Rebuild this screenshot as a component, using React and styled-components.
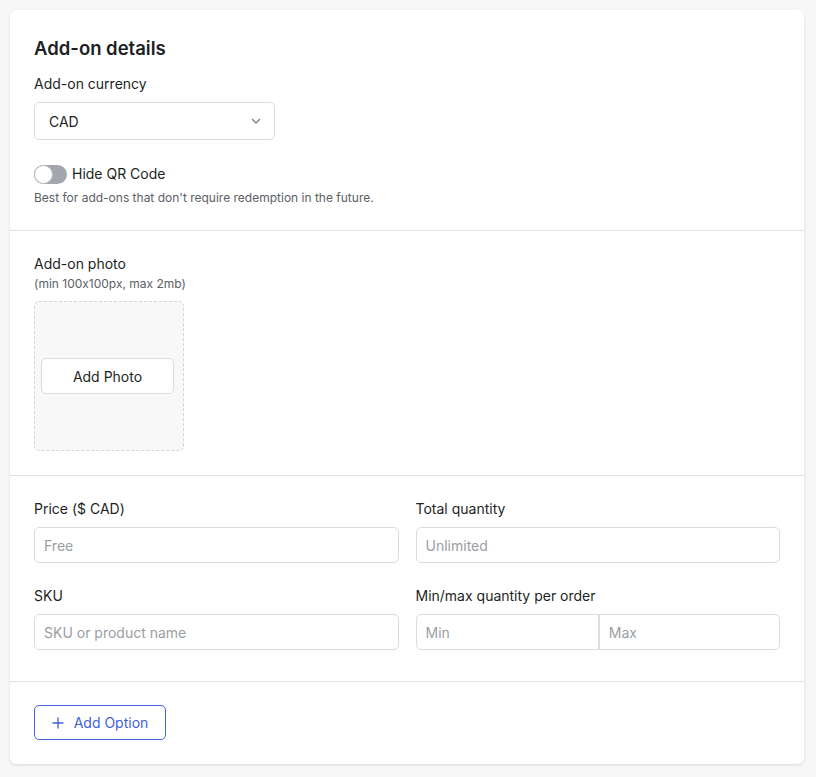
import React from 'react';
import styled, { createGlobalStyle } from 'styled-components';

const Global = createGlobalStyle`
  * { box-sizing: border-box; }
  body {
    margin: 0;
    background: #f7f7f7;
    font-family: Inter, "Noto Sans", sans-serif;
    font-feature-settings: "calt" 0;
    color: #1d1f23;
  }
`;

const Page = styled.div`
  padding: 10px 12px 12px 10px;
`;

const Card = styled.div`
  background: #fff;
  border-radius: 6px;
  box-shadow: 0 1px 3px rgba(0, 0, 0, 0.12);
`;

const Section = styled.div`
  padding: ${p => (p.$first ? 24 : 23)}px 24px ${p => p.$bottom || 24}px;
  border-top: ${p => (p.$first ? 'none' : '1px solid #e2e2e2')};
  display: flex;
  flex-direction: column;
`;

const Title = styled.h2`
  margin: 0 0 12px;
  font-size: 18.5px;
  line-height: 28px;
  font-weight: 600;
`;

const Label = styled.div`
  font-size: 14px;
  line-height: 20px;
  margin-bottom: ${p => p.$mb ?? 8}px;
`;

const Hint = styled.div`
  font-size: 12px;
  line-height: 16px;
  color: #5c6066;
`;

const Select = styled.div`
  width: 241px;
  height: 38px;
  border: 1px solid #dcdcdc;
  border-radius: 5px;
  display: flex;
  align-items: center;
  justify-content: space-between;
  padding: 0 12px 0 14px;
  font-size: 14px;
`;

const ToggleRow = styled.div`
  display: flex;
  align-items: center;
  gap: 5px;
  margin-top: 24px;
  margin-bottom: 6px;
  font-size: 14px;
  line-height: 20px;
`;

const Track = styled.div`
  width: 33px;
  height: 19px;
  border-radius: 10px;
  background: #a3a7ad;
  position: relative;
`;

const Knob = styled.div`
  position: absolute;
  left: 0;
  top: 0;
  width: 19px;
  height: 19px;
  border-radius: 50%;
  background: #fff;
  border: 1px solid #b9bcc1;
`;

const Drop = styled.div`
  margin-top: 9px;
  width: 150px;
  height: 150px;
  border: 1px dashed #d6d6d6;
  border-radius: 5px;
  background: #f8f8f8;
  display: flex;
  align-items: center;
  padding-left: 6px;
`;

const PhotoButton = styled.button`
  width: 133px;
  height: 36px;
  background: #fff;
  border: 1px solid #dcdcdc;
  border-radius: 5px;
  font: inherit;
  font-size: 14px;
  color: #1d1f23;
`;

const Grid = styled.div`
  display: grid;
  grid-template-columns: 1fr 1fr;
  column-gap: 17px;
  row-gap: 23px;
`;

const Field = styled.div`
  display: flex;
  flex-direction: column;
`;

const Input = styled.div`
  height: 36px;
  border: 1px solid #dcdcdc;
  border-radius: 5px;
  display: flex;
  align-items: center;
  font-size: 14px;
  color: #9a9ea4;
  padding: 0 9px;
`;

const SplitInput = styled.div`
  height: 36px;
  border: 1px solid #dcdcdc;
  border-radius: 5px;
  display: grid;
  grid-template-columns: 1fr 1fr;
`;

const Half = styled.div`
  display: flex;
  align-items: center;
  padding: 0 9px;
  font-size: 14px;
  color: #9a9ea4;
  border-left: ${p => (p.$divider ? '2px solid #dcdcdc' : 'none')};
`;

const OptionButton = styled.button`
  align-self: flex-start;
  width: 132px;
  height: 35px;
  border: 1px solid #4567e0;
  border-radius: 5px;
  background: #fff;
  color: #3f5fd8;
  font: inherit;
  font-size: 14px;
  display: flex;
  align-items: center;
  justify-content: center;
  gap: 10px;
  padding: 0;
`;

const Chevron = () => (
  <svg width="12" height="12" viewBox="0 0 12 12" fill="none">
    <path d="M2.5 4.5 6 8l3.5-3.5" stroke="#7a7e84" strokeWidth="1.3" strokeLinecap="round" strokeLinejoin="round" />
  </svg>
);

const Plus = () => (
  <svg width="12" height="12" viewBox="0 0 12 12" fill="none">
    <path d="M6 1v10M1 6h10" stroke="#3f5fd8" strokeWidth="1.3" strokeLinecap="round" />
  </svg>
);

export default function App() {
  return (
    <Page>
      <Global />
      <Card>
        <Section $first>
          <Title>Add-on details</Title>
          <Label>Add-on currency</Label>
          <Select>
            CAD
            <Chevron />
          </Select>
          <ToggleRow>
            <Track><Knob /></Track>
            Hide QR Code
          </ToggleRow>
          <Hint>Best for add-ons that don't require redemption in the future.</Hint>
        </Section>

        <Section>
          <Label $mb={2}>Add-on photo</Label>
          <Hint>(min 100x100px, max 2mb)</Hint>
          <Drop>
            <PhotoButton>Add Photo</PhotoButton>
          </Drop>
        </Section>

        <Section $bottom={31}>
          <Grid>
            <Field>
              <Label>Price ($ CAD)</Label>
              <Input>Free</Input>
            </Field>
            <Field>
              <Label>Total quantity</Label>
              <Input>Unlimited</Input>
            </Field>
            <Field>
              <Label>SKU</Label>
              <Input>SKU or product name</Input>
            </Field>
            <Field>
              <Label>Min/max quantity per order</Label>
              <SplitInput>
                <Half>Min</Half>
                <Half $divider>Max</Half>
              </SplitInput>
            </Field>
          </Grid>
        </Section>

        <Section>
          <OptionButton>
            <Plus />
            Add Option
          </OptionButton>
        </Section>
      </Card>
    </Page>
  );
}
